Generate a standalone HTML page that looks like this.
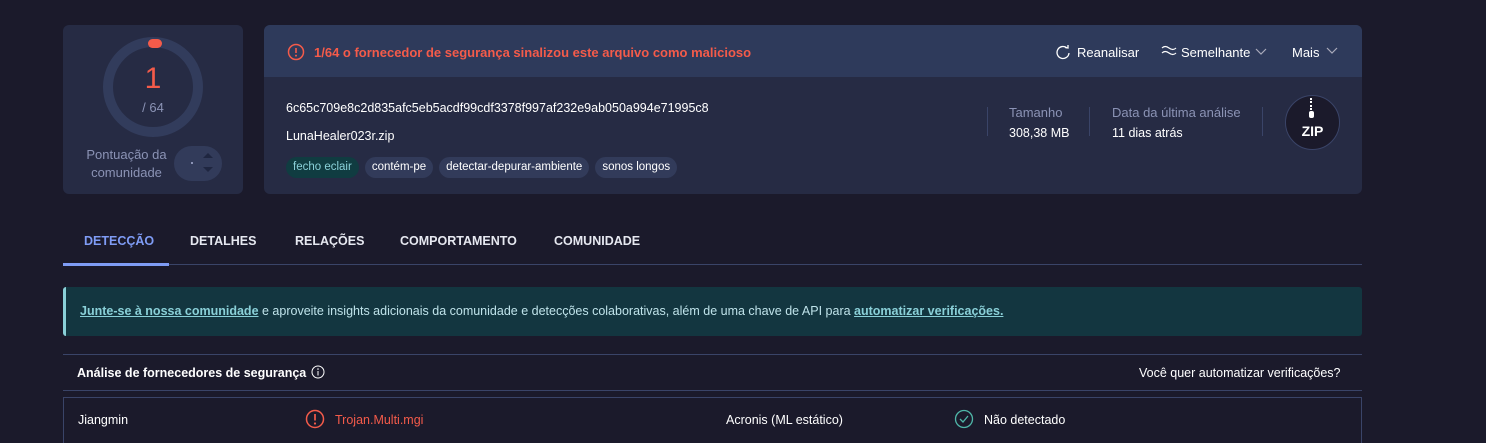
<!DOCTYPE html>
<html><head><meta charset="utf-8"><style>
*{box-sizing:border-box;margin:0;padding:0}
html{width:1486px;height:443px;overflow:hidden}
body{width:1486px;height:443px;background:#1b1a2b;font-family:"Liberation Sans",sans-serif;color:#fff;position:relative;overflow:hidden;font-size:13px}
.abs{position:absolute}
.card{background:#262b44;border-radius:6px}
.tag{display:inline-block;height:21px;line-height:21px;padding:0 7px;border-radius:11px;background:#323b5a;font-size:11.5px;margin-right:6px;color:#fff}
.tab{position:absolute;top:234px;font-size:12.5px;font-weight:bold;color:#e6e8f0}
.lbl{color:#8b93b5;font-size:13px}
</style></head><body>
<div class="abs card" style="left:63px;top:25px;width:180px;height:169px"></div>
<svg class="abs" style="left:103px;top:37px" width="100" height="100"><circle cx="50" cy="50" r="45" fill="none" stroke="#323c5c" stroke-width="10"/><rect x="45" y="2" width="14" height="9" rx="4.5" fill="#f45b4a"/></svg>
<div class="abs" style="left:103px;top:62px;width:100px;text-align:center;color:#f45b4a;font-size:30px">1</div>
<div class="abs" style="left:103px;top:100px;width:100px;text-align:center;color:#8b93b5;font-size:13px">/ 64</div>
<div class="abs lbl" style="left:84px;top:146px;width:85px;text-align:center;line-height:18px">Pontuação da comunidade</div>
<div class="abs" style="left:174px;top:146px;width:48px;height:35px;border-radius:18px;background:#323b5a"></div>
<div class="abs" style="left:191px;top:162px;width:2px;height:2px;background:#8b93b5"></div>
<div class="abs" style="left:203px;top:153px;border:5px solid transparent;border-bottom-color:#1f2640;border-top:0"></div>
<div class="abs" style="left:203px;top:167px;border:5px solid transparent;border-top-color:#1f2640;border-bottom:0"></div>

<div class="abs card" style="left:264px;top:25px;width:1098px;height:169px"></div>
<div class="abs" style="left:264px;top:25px;width:1098px;height:52px;background:#2e3a5b;border-radius:6px 6px 0 0"></div>
<svg class="abs" style="left:287px;top:43px" width="18" height="18"><circle cx="9" cy="9" r="7.5" fill="none" stroke="#f45b4a" stroke-width="1.5"/><line x1="9" y1="5" x2="9" y2="10" stroke="#f45b4a" stroke-width="1.6"/><circle cx="9" cy="12.6" r="1" fill="#f45b4a"/></svg>
<div class="abs" style="left:314px;top:45px;color:#f45b4a;font-weight:bold;font-size:13px">1/64 o fornecedor de segurança sinalizou este arquivo como malicioso</div>
<svg class="abs" style="left:1055px;top:44px" width="16" height="16"><path d="M12 4 A6 6 0 1 0 14 9" fill="none" stroke="#fff" stroke-width="1.3"/><path d="M10 3.5 L13 4 L13 1" fill="none" stroke="#fff" stroke-width="1.3"/></svg>
<div class="abs" style="left:1077px;top:45px;font-size:13px">Reanalisar</div>
<svg class="abs" style="left:1161px;top:45px" width="16" height="12"><path d="M1 3 Q4 0 8 3 T15 3 M1 8 Q4 5 8 8 T15 8" fill="none" stroke="#fff" stroke-width="1.2"/></svg>
<div class="abs" style="left:1181px;top:45px;font-size:13px">Semelhante</div>
<svg class="abs" style="left:1255px;top:48px" width="12" height="8"><path d="M1 1 L6 6 L11 1" fill="none" stroke="#aab" stroke-width="1.2"/></svg>
<div class="abs" style="left:1292px;top:45px;font-size:13px">Mais</div>
<svg class="abs" style="left:1326px;top:47px" width="12" height="8"><path d="M1 1 L6 6 L11 1" fill="none" stroke="#aab" stroke-width="1.2"/></svg>

<div class="abs" style="left:286px;top:101px;font-size:12.5px">6c65c709e8c2d835afc5eb5acdf99cdf3378f997af232e9ab050a994e71995c8</div>
<div class="abs" style="left:286px;top:129px;font-size:12.5px">LunaHealer023r.zip</div>
<div class="abs" style="left:286px;top:157px;white-space:nowrap"><span class="tag" style="background:#103c41;color:#8ad0d8">fecho eclair</span><span class="tag">contém-pe</span><span class="tag">detectar-depurar-ambiente</span><span class="tag">sonos longos</span></div>
<div class="abs" style="left:987px;top:107px;width:1px;height:29px;background:#3a4468"></div>
<div class="abs" style="left:1089px;top:107px;width:1px;height:29px;background:#3a4468"></div>
<div class="abs" style="left:1262px;top:107px;width:1px;height:29px;background:#3a4468"></div>
<div class="abs lbl" style="left:1009px;top:105px">Tamanho</div>
<div class="abs" style="left:1009px;top:126px;font-size:12.5px">308,38 MB</div>
<div class="abs lbl" style="left:1112px;top:105px">Data da última análise</div>
<div class="abs" style="left:1112px;top:126px;font-size:12.5px">11 dias atrás</div>
<div class="abs" style="left:1285px;top:95px;width:55px;height:55px;border-radius:50%;background:#1b1a2b;border:1px solid #3a4468"></div>
<div class="abs" style="left:1310px;top:98px;width:4px;height:12px;border-left:2px dotted #fff"></div>
<div class="abs" style="left:1309px;top:111px;width:5px;height:7px;background:#fff;border-radius:2px"></div>
<div class="abs" style="left:1285px;top:123px;width:55px;text-align:center;font-weight:bold;font-size:14px">ZIP</div>

<div class="tab" style="left:84px;color:#7f9cf5">DETECÇÃO</div>
<div class="tab" style="left:190px">DETALHES</div>
<div class="tab" style="left:295px">RELAÇÕES</div>
<div class="tab" style="left:400px">COMPORTAMENTO</div>
<div class="tab" style="left:554px">COMUNIDADE</div>
<div class="abs" style="left:63px;top:264px;width:1299px;height:1px;background:#3a4468"></div>
<div class="abs" style="left:63px;top:263px;width:106px;height:3px;background:#7f9cf5"></div>

<div class="abs" style="left:63px;top:287px;width:1299px;height:49px;background:#133640;border-left:3px solid #8ad0d8;border-radius:3px"></div>
<div class="abs" style="left:80px;top:304px;font-size:12.5px;color:#bfe3ea;white-space:nowrap"><b style="text-decoration:underline;color:#8ad0d8">Junte-se à nossa comunidade</b> e aproveite insights adicionais da comunidade e detecções colaborativas, além de uma chave de API para <b style="text-decoration:underline;color:#8ad0d8">automatizar verificações.</b></div>

<div class="abs" style="left:63px;top:354px;width:1299px;height:1px;background:#3a4468"></div>
<div class="abs" style="left:77px;top:366px;font-weight:bold;font-size:12.5px">Análise de fornecedores de segurança</div>
<svg class="abs" style="left:311px;top:365px" width="14" height="14"><circle cx="7" cy="7" r="6" fill="none" stroke="#fff" stroke-width="1"/><line x1="7" y1="6" x2="7" y2="10.5" stroke="#fff"/><circle cx="7" cy="4" r=".8" fill="#fff"/></svg>
<div class="abs" style="left:1139px;top:366px;font-size:12.5px">Você quer automatizar verificações?</div>
<div class="abs" style="left:63px;top:390px;width:1299px;height:1px;background:#3a4468"></div>
<div class="abs" style="left:63px;top:397px;width:1299px;height:50px;border:1px solid #3a4468"></div>
<div class="abs" style="left:78px;top:413px;font-size:12.5px">Jiangmin</div>
<svg class="abs" style="left:305px;top:409px" width="20" height="20"><circle cx="10" cy="10" r="8.5" fill="none" stroke="#f45b4a" stroke-width="1.5"/><line x1="10" y1="5" x2="10" y2="11.5" stroke="#f45b4a" stroke-width="1.7"/><circle cx="10" cy="14.5" r="1.1" fill="#f45b4a"/></svg>
<div class="abs" style="left:335px;top:413px;font-size:12.5px;color:#f45b4a">Trojan.Multi.mgi</div>
<div class="abs" style="left:726px;top:413px;font-size:12.5px">Acronis (ML estático)</div>
<svg class="abs" style="left:954px;top:409px" width="20" height="20"><circle cx="10" cy="10" r="8.5" fill="none" stroke="#4fb6a8" stroke-width="1.3"/><path d="M6 10 L9 13 L14 7" fill="none" stroke="#4fb6a8" stroke-width="1.3"/></svg>
<div class="abs" style="left:984px;top:413px;font-size:12.5px">Não detectado</div>
</body></html>
